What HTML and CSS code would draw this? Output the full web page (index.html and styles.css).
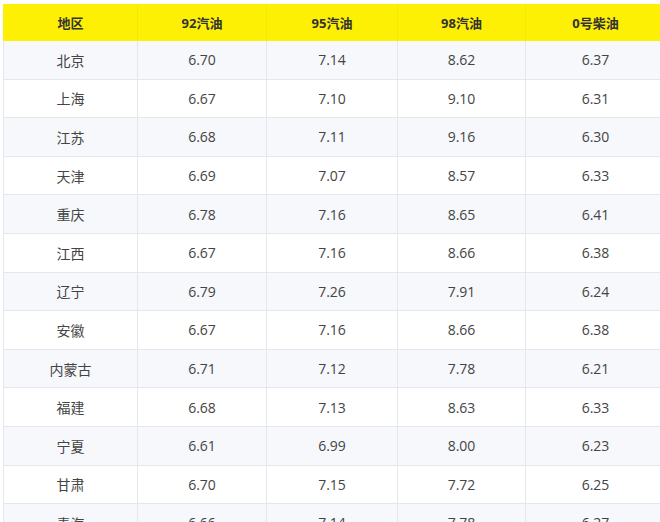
FILE: index.html
```html
<!DOCTYPE html>
<html lang="zh">
<head>
<meta charset="utf-8">
<link rel="stylesheet" href="styles.css">
</head>
<body>
<table class="price-table">
  <colgroup>
    <col class="c1"><col class="c2"><col class="c3"><col class="c4"><col class="c5">
  </colgroup>
  <thead>
    <tr><th>地区</th><th>92汽油</th><th>95汽油</th><th>98汽油</th><th>0号柴油</th></tr>
  </thead>
  <tbody>
    <tr><td>北京</td><td>6.70</td><td>7.14</td><td>8.62</td><td>6.37</td></tr>
    <tr><td>上海</td><td>6.67</td><td>7.10</td><td>9.10</td><td>6.31</td></tr>
    <tr><td>江苏</td><td>6.68</td><td>7.11</td><td>9.16</td><td>6.30</td></tr>
    <tr><td>天津</td><td>6.69</td><td>7.07</td><td>8.57</td><td>6.33</td></tr>
    <tr><td>重庆</td><td>6.78</td><td>7.16</td><td>8.65</td><td>6.41</td></tr>
    <tr><td>江西</td><td>6.67</td><td>7.16</td><td>8.66</td><td>6.38</td></tr>
    <tr><td>辽宁</td><td>6.79</td><td>7.26</td><td>7.91</td><td>6.24</td></tr>
    <tr><td>安徽</td><td>6.67</td><td>7.16</td><td>8.66</td><td>6.38</td></tr>
    <tr><td>内蒙古</td><td>6.71</td><td>7.12</td><td>7.78</td><td>6.21</td></tr>
    <tr><td>福建</td><td>6.68</td><td>7.13</td><td>8.63</td><td>6.33</td></tr>
    <tr><td>宁夏</td><td>6.61</td><td>6.99</td><td>8.00</td><td>6.23</td></tr>
    <tr><td>甘肃</td><td>6.70</td><td>7.15</td><td>7.72</td><td>6.25</td></tr>
    <tr><td>青海</td><td>6.66</td><td>7.14</td><td>7.78</td><td>6.27</td></tr>
  </tbody>
</table>
</body>
</html>
```
FILE: styles.css
```css
html, body {
  margin: 0;
  padding: 0;
  background: #ffffff;
  overflow: hidden;
}
body {
  padding: 4px 0 0 3px;
  font-family: "Open Sans", "Noto Sans CJK SC", sans-serif;
}
.price-table {
  border-collapse: collapse;
  table-layout: fixed;
  width: 662px;
}
.price-table .c1 { width: 134px; }
.price-table .c2 { width: 129px; }
.price-table .c3 { width: 131px; }
.price-table .c4 { width: 128px; }
.price-table .c5 { width: 140px; }
.price-table th,
.price-table td {
  text-align: center;
  border: 1px solid #e4e7eb;
  padding: 0;
}
.price-table th {
  background: #fdf004;
  height: 35px;
  font-size: 13px;
  font-weight: bold;
  color: #333333;
  border-color: #fdf004;
  border-right-color: #f3e80a;
}
.price-table td {
  height: 37.6px;
  font-size: 14px;
  color: #444444;
}
.price-table tbody tr:nth-child(odd) td {
  background: #f6f8fb;
}
.price-table tbody tr:nth-child(even) td {
  background: #ffffff;
}
```
